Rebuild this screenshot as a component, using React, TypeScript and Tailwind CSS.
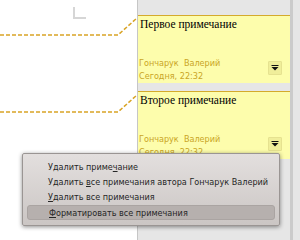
import React from "react";

const menuItems: { before: string; key: string; after: string; active?: boolean }[] = [
  { before: "Удалить приме", key: "ч", after: "ание" },
  { before: "Удалить ", key: "в", after: "се примечания автора Гончарук  Валерий" },
  { before: "", key: "У", after: "далить все примечания" },
  { before: "", key: "Ф", after: "орматировать все примечания", active: true },
];

function DropButton() {
  return (
    <div className="w-[14px] h-[14px] bg-[#f0ee9a] border border-[#e6e290] rounded-[1px] flex items-center justify-center">
      <svg width="8" height="6" viewBox="0 0 8 6">
        <rect x="0.5" y="0" width="7" height="1" fill="#111" />
        <path d="M0.5 2 L7.5 2 L4 5.5 Z" fill="#111" />
      </svg>
    </div>
  );
}

function Note({ title, className }: { title: string; className?: string }) {
  return (
    <div className={"border-t border-[#d4aa2c] bg-[#fdfdac] h-[68px] flex flex-col " + (className ?? "")}>
      <div className="pl-[2px] pt-[1px] h-[15px] text-[11.5px] leading-[14px] text-black font-['Liberation_Serif',serif]">
        {title}
      </div>
      <div className="mt-[26px] flex justify-between">
        <div className="pl-[1px] text-[9px] leading-[13px] text-[#c9a526] font-['DejaVu_Sans_Condensed','Liberation_Sans',sans-serif]">
          <div>Гончарук&nbsp; Валерий</div>
          <div>Сегодня, 22:32</div>
        </div>
        <div className="mt-[4px] mr-[8px]">
          <DropButton />
        </div>
      </div>
    </div>
  );
}

export default function App() {
  return (
    <div className="relative w-[300px] h-[240px] overflow-hidden bg-white flex">
      <div className="w-[137px] shrink-0">
        <div className="mt-[7px] ml-[73px] w-[13px] h-[12px] border-l-2 border-b-2 border-[#d6d6d6]" />
      </div>
      <div className="flex-1 flex bg-[#e6e6e6] border-l border-[#c6c6c6]">
        <div className="w-[152px] pt-[15px] flex flex-col">
          <Note title="Первое примечание" />
          <Note title="Второе примечание" className="mt-[8px]" />
        </div>
        <div className="w-[3px] bg-[#cbcbcb]" />
        <div className="flex-1" />
      </div>

      <svg className="absolute left-0 top-0" width="140" height="120" viewBox="0 0 140 120">
        <path d="M0 35 L118 35 L137 18" fill="none" stroke="#d9a426" strokeWidth="1.5" strokeDasharray="4 2" />
        <path d="M0 112 L118 112 L137 95" fill="none" stroke="#d9a426" strokeWidth="1.5" strokeDasharray="4 2" />
      </svg>

      <div className="absolute left-[22px] top-[153px] w-[258px] h-[73px] rounded-[2px] border border-[#9a9593] bg-gradient-to-b from-[#e3dfde] to-[#cbc6c4] shadow-[0_1px_4px_rgba(0,0,0,0.45)] px-[4px] pt-[6px] font-['DejaVu_Sans_Condensed','Liberation_Sans',sans-serif] text-[9px] text-[#262626]">
        {menuItems.map((it, i) => (
          <div
            key={i}
            className={
              "h-[15px] leading-[15px] pl-[21px] rounded-[3px] whitespace-nowrap " +
              (it.active ? "bg-[#b6b0ae] border border-[#aaa4a2] leading-[13px]" : "")
            }
          >
            {it.before}
            <span className="underline underline-offset-[1px]">{it.key}</span>
            {it.after}
          </div>
        ))}
      </div>
    </div>
  );
}
